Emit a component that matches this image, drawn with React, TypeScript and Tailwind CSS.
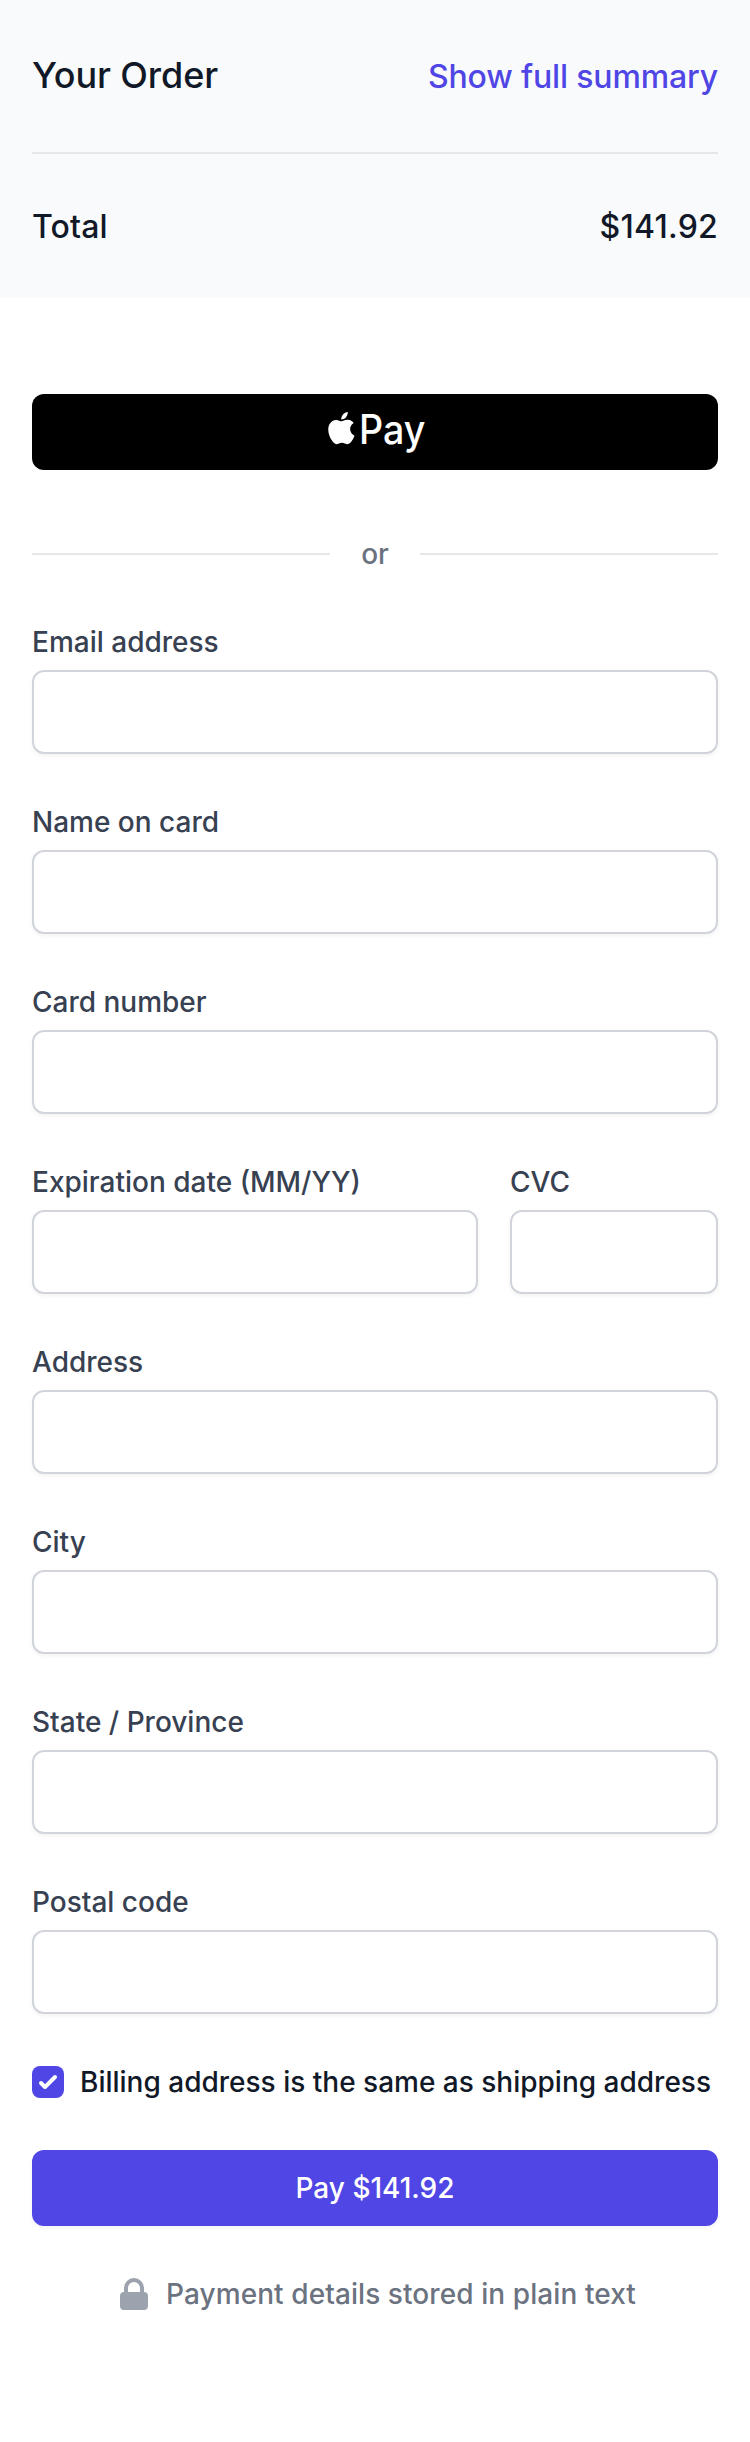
import React from "react";

const inputClass =
  "block h-[84px] w-full rounded-xl border-2 border-[#d1d5db] bg-white px-6 text-[28px] shadow-[0_2px_4px_rgba(0,0,0,0.05)]";

function Field({ id, label, className = "col-span-3" }: { id: string; label: string; className?: string }) {
  return (
    <div className={className}>
      <label htmlFor={id} className="block text-[28px] leading-10 font-medium text-[#374151]">
        {label}
      </label>
      <div className="mt-2">
        <input id={id} type="text" className={inputClass} />
      </div>
    </div>
  );
}

function OrderSummary() {
  return (
    <section className="bg-[#f9fafb] px-8">
      <div className="flex items-center justify-between py-12">
        <h2 className="h-14 text-[36px] leading-[54px] font-medium tracking-[-0.1px] text-[#111827]">Your Order</h2>
        <button
          type="button"
          className="h-12 text-[32px] leading-[50px] font-medium tracking-[-0.15px] text-[#4f46e5]"
        >
          Show full summary
        </button>
      </div>
      <div className="flex items-center justify-between border-t-2 border-[#e5e7eb] py-12 text-[32px] leading-[50px] font-medium text-[#111827]">
        <span className="h-12 tracking-[0.15px]">Total</span>
        <span className="h-12 tracking-[0.25px]">$141.92</span>
      </div>
    </section>
  );
}

export default function App() {
  return (
    <div className="min-h-[2442px] w-full bg-white font-['Inter',sans-serif] antialiased">
      <OrderSummary />
      <main className="px-8 pt-24">
        <button type="button" className="flex h-[76px] w-full justify-center rounded-xl bg-black pt-[18px] text-white">
          <span className="flex h-10 w-[97px]">
            <svg className="h-10 w-[32.5px] shrink-0" fill="currentColor" viewBox="0 0 16.25 20" aria-hidden="true">
              <path d="M9.536 2.579c-.571.675-1.485 1.208-2.4 1.132-.113-.914.334-1.884.858-2.484C8.565.533 9.564.038 10.374 0c.095.951-.276 1.884-.838 2.579zm.829 1.313c-1.324-.077-2.457.751-3.085.751-.638 0-1.6-.713-2.647-.694-1.362.019-2.628.79-3.323 2.017-1.429 2.455-.372 6.09 1.009 8.087.676.99 1.485 2.075 2.552 2.036 1.009-.038 1.409-.656 2.628-.656 1.228 0 1.58.656 2.647.637 1.104-.019 1.8-.99 2.475-1.979.771-1.122 1.086-2.217 1.105-2.274-.02-.019-2.133-.829-2.152-3.263-.02-2.036 1.666-3.007 1.742-3.064-.952-1.408-2.437-1.56-2.951-1.598z" />
            </svg>
            <span className="inline-block origin-left scale-x-[0.93] pt-0.5 text-[40.5px] leading-[32px] font-medium">
              Pay
            </span>
          </span>
        </button>

        <div className="mt-16 flex h-10 items-center">
          <div className="h-0.5 flex-1 bg-[#e5e7eb]" />
          <span className="w-[90px] text-center text-[28px] leading-10 font-medium text-[#6b7280]">or</span>
          <div className="h-0.5 flex-1 bg-[#e5e7eb]" />
        </div>

        <form className="mt-12">
          <div className="grid grid-cols-[446px_208px] gap-x-8 gap-y-12">
            <Field id="email" label="Email address" className="col-span-2" />
            <Field id="name" label="Name on card" className="col-span-2" />
            <Field id="card" label="Card number" className="col-span-2" />
            <Field id="expiration" label="Expiration date (MM/YY)" className="col-span-1" />
            <Field id="cvc" label="CVC" className="col-span-1" />
            <Field id="address" label="Address" className="col-span-2" />
            <Field id="city" label="City" className="col-span-2" />
            <Field id="province" label="State / Province" className="col-span-2" />
            <Field id="postal" label="Postal code" className="col-span-2" />
          </div>

          <label className="mt-12 flex h-10 items-center gap-4">
            <span role="checkbox" aria-checked="true" className="size-8 shrink-0 rounded-lg bg-[#4f46e5] text-white">
              <svg viewBox="0 0 16 16" className="size-8" fill="currentColor" aria-hidden="true">
                <path d="M12.207 4.793a1 1 0 010 1.414l-5 5a1 1 0 01-1.414 0l-2-2a1 1 0 011.414-1.414L6.5 9.086l4.293-4.293a1 1 0 011.414 0z" />
              </svg>
            </span>
            <span className="text-[28px] leading-10 font-medium whitespace-nowrap text-[#111827]">
              Billing address is the same as shipping address
            </span>
          </label>

          <button
            type="button"
            className="mt-12 flex h-[76px] w-full items-center justify-center rounded-xl bg-[#4f46e5] text-[28px] leading-10 font-medium text-white shadow-[0_2px_4px_rgba(0,0,0,0.05)]"
          >
            Pay $141.92
          </button>

          <p className="mt-12 flex h-10 items-center justify-center text-[28px] leading-10 font-medium tracking-[0.08px] text-[#6b7280]">
            <svg viewBox="0 0 20 20" className="mr-3 size-10 text-[#9ca3af]" fill="currentColor" aria-hidden="true">
              <path
                fillRule="evenodd"
                clipRule="evenodd"
                d="M5 9V7a5 5 0 0110 0v2a2 2 0 012 2v5a2 2 0 01-2 2H5a2 2 0 01-2-2v-5a2 2 0 012-2zm8-2v2H7V7a3 3 0 016 0z"
              />
            </svg>
            Payment details stored in plain text
          </p>
        </form>
      </main>
    </div>
  );
}
